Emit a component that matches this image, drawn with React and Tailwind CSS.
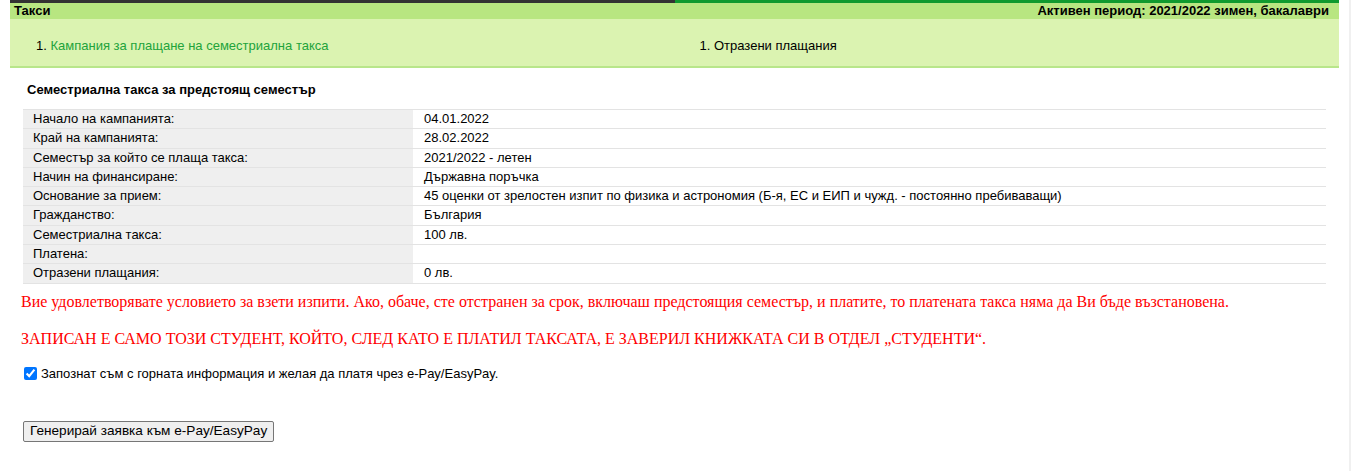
import React from 'react';

const rows = [
  ['Начало на кампанията:', '04.01.2022'],
  ['Край на кампанията:', '28.02.2022'],
  ['Семестър за който се плаща такса:', '2021/2022 - летен'],
  ['Начин на финансиране:', 'Държавна поръчка'],
  ['Основание за прием:', '45 оценки от зрелостен изпит по физика и астрономия (Б-я, ЕС и ЕИП и чужд. - постоянно пребиваващи)'],
  ['Гражданство:', 'България'],
  ['Семестриална такса:', '100 лв.'],
  ['Платена:', ''],
  ['Отразени плащания:', '0 лв.'],
];

export default function App() {
  return (
    <div className="min-h-screen bg-white font-['Liberation_Sans',Arial,sans-serif] text-black flex">
      <div className="flex-1 px-[10px]">
        {/* top stripe */}
        <div className="flex h-[3px]">
          <div className="w-1/2 bg-[#333333]"></div>
          <div className="w-1/2 bg-[#0f9a2e]"></div>
        </div>

        {/* title bar */}
        <div className="h-4 bg-[#b8e681] flex items-center justify-between px-1 text-[13px] leading-4 font-bold">
          <span>Такси</span>
          <span className="pr-[6px]">Активен период: 2021/2022 зимен, бакалаври</span>
        </div>

        {/* steps */}
        <div className="h-[49px] bg-[#dbf3b1] border-b-2 border-[#b8e68a] flex text-[13px]">
          <div className="w-1/2 pl-[26px] pt-[17px]">
            1. <span className="text-[#22a33b]">Кампания за плащане на семестриална такса</span>
          </div>
          <div className="w-1/2 pl-[25px] pt-[17px]">1. Отразени плащания</div>
        </div>

        <div className="pl-[13px] pr-[13px]">
          <h3 className="text-[13px] font-bold pt-[14px] pb-[11px] pl-[4px] leading-4">
            Семестриална такса за предстоящ семестър
          </h3>

          <table className="w-full border-collapse text-[13px] leading-[18px]">
            <tbody>
              {rows.map(([label, value]) => (
                <tr key={label} className="border-t border-[#e3e3e3]">
                  <td className="w-[390px] bg-[#efefef] pl-[10px] h-[19.25px] py-0">{label}</td>
                  <td className="pl-[11px] h-[19.25px] py-0">{value}</td>
                </tr>
              ))}
            </tbody>
          </table>
          <div className="h-px bg-[#e3e3e3]"></div>

          <p className="font-['Liberation_Serif','Times_New_Roman',serif] text-[16px] text-[#ff0000] mt-[9px] -ml-[2px] leading-[18px]">
            Вие удовлетворявате условието за взети изпити. Ако, обаче, сте отстранен за срок, включаш предстоящия семестър, и платите, то платената такса няма да Ви бъде възстановена.
          </p>
          <p className="font-['Liberation_Serif','Times_New_Roman',serif] text-[16px] text-[#ff0000] mt-[19px] -ml-[2px] leading-[18px]">
            ЗАПИСАН Е САМО ТОЗИ СТУДЕНТ, КОЙТО, СЛЕД КАТО Е ПЛАТИЛ ТАКСАТА, Е ЗАВЕРИЛ КНИЖКАТА СИ В ОТДЕЛ „СТУДЕНТИ“.
          </p>

          <label className="flex items-center mt-[18px] text-[13px] leading-4">
            <input
              type="checkbox"
              defaultChecked
              className="w-[13px] h-[13px] ml-[1px] mr-[4px] accent-[#0075ff]"
            />
            Запознат съм с горната информация и желая да платя чрез e-Pay/EasyPay.
          </label>

          <button className="mt-[39px] h-[21px] px-[6px] bg-[#efefef] border border-[#767676] rounded-[2px] text-[13.6px] leading-4">
            Генерирай заявка към e-Pay/EasyPay
          </button>
        </div>
      </div>
      <div className="w-[2px] bg-[#f0f0f0]"></div>
    </div>
  );
}
